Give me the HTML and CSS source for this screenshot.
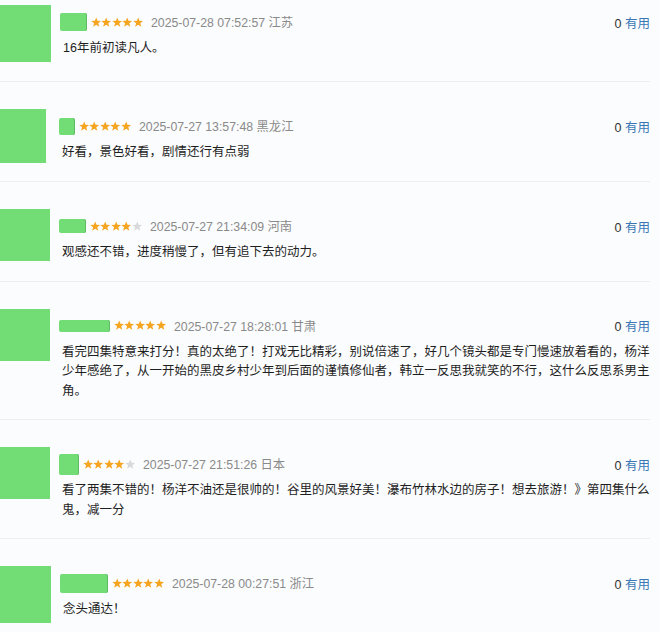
FILE: index.html
```html
<!DOCTYPE html>
<html lang="zh-CN">
<head>
<meta charset="utf-8">
<link rel="stylesheet" href="styles.css">
</head>
<body>
<svg class="defs" width="0" height="0" aria-hidden="true">
  <defs>
    <polygon id="star" points="5,0.4 6.25,3.65 9.7,3.8 7,5.95 7.95,9.3 5,7.4 2.05,9.3 3,5.95 0.3,3.8 3.75,3.65"/>
  </defs>
</svg>
<ul class="reviews">
  <li class="review first">
    <div class="avatar tall"></div>
    <div class="body">
      <div class="meta">
        <span class="name w27 h18"></span>
        <span class="stars"><svg viewBox="0 0 10 10"><use href="#star"/></svg><svg viewBox="0 0 10 10"><use href="#star"/></svg><svg viewBox="0 0 10 10"><use href="#star"/></svg><svg viewBox="0 0 10 10"><use href="#star"/></svg><svg viewBox="0 0 10 10"><use href="#star"/></svg></span>
        <span class="date">2025-07-28 07:52:57 江苏</span>
        <span class="useful"><span class="count">0</span> <span class="vote">有用</span></span>
      </div>
      <p class="text">16年前初读凡人。</p>
    </div>
  </li>
  <li class="review">
    <div class="avatar narrow"></div>
    <div class="body">
      <div class="meta">
        <span class="name w16 h17"></span>
        <span class="stars"><svg viewBox="0 0 10 10"><use href="#star"/></svg><svg viewBox="0 0 10 10"><use href="#star"/></svg><svg viewBox="0 0 10 10"><use href="#star"/></svg><svg viewBox="0 0 10 10"><use href="#star"/></svg><svg viewBox="0 0 10 10"><use href="#star"/></svg></span>
        <span class="date">2025-07-27 13:57:48 黑龙江</span>
        <span class="useful"><span class="count">0</span> <span class="vote">有用</span></span>
      </div>
      <p class="text">好看，景色好看，剧情还行有点弱</p>
    </div>
  </li>
  <li class="review">
    <div class="avatar short"></div>
    <div class="body">
      <div class="meta">
        <span class="name w27 h14"></span>
        <span class="stars"><svg viewBox="0 0 10 10"><use href="#star"/></svg><svg viewBox="0 0 10 10"><use href="#star"/></svg><svg viewBox="0 0 10 10"><use href="#star"/></svg><svg viewBox="0 0 10 10"><use href="#star"/></svg><svg class="off" viewBox="0 0 10 10"><use href="#star"/></svg></span>
        <span class="date">2025-07-27 21:34:09 河南</span>
        <span class="useful"><span class="count">0</span> <span class="vote">有用</span></span>
      </div>
      <p class="text">观感还不错，进度稍慢了，但有追下去的动力。</p>
    </div>
  </li>
  <li class="review">
    <div class="avatar short"></div>
    <div class="body">
      <div class="meta">
        <span class="name w51 h12"></span>
        <span class="stars"><svg viewBox="0 0 10 10"><use href="#star"/></svg><svg viewBox="0 0 10 10"><use href="#star"/></svg><svg viewBox="0 0 10 10"><use href="#star"/></svg><svg viewBox="0 0 10 10"><use href="#star"/></svg><svg viewBox="0 0 10 10"><use href="#star"/></svg></span>
        <span class="date">2025-07-27 18:28:01 甘肃</span>
        <span class="useful"><span class="count">0</span> <span class="vote">有用</span></span>
      </div>
      <p class="text">看完四集特意来打分！真的太绝了！打戏无比精彩，别说倍速了，好几个镜头都是专门慢速放着看的，杨洋少年感绝了，从一开始的黑皮乡村少年到后面的谨慎修仙者，韩立一反思我就笑的不行，这什么反思系男主角。</p>
    </div>
  </li>
  <li class="review">
    <div class="avatar short"></div>
    <div class="body">
      <div class="meta">
        <span class="name w20 h21"></span>
        <span class="stars"><svg viewBox="0 0 10 10"><use href="#star"/></svg><svg viewBox="0 0 10 10"><use href="#star"/></svg><svg viewBox="0 0 10 10"><use href="#star"/></svg><svg viewBox="0 0 10 10"><use href="#star"/></svg><svg class="off" viewBox="0 0 10 10"><use href="#star"/></svg></span>
        <span class="date">2025-07-27 21:51:26 日本</span>
        <span class="useful"><span class="count">0</span> <span class="vote">有用</span></span>
      </div>
      <p class="text">看了两集不错的！杨洋不油还是很帅的！谷里的风景好美！瀑布竹林水边的房子！想去旅游！》第四集什么鬼，减一分</p>
    </div>
  </li>
  <li class="review">
    <div class="avatar tall"></div>
    <div class="body">
      <div class="meta">
        <span class="name w48 h19"></span>
        <span class="stars"><svg viewBox="0 0 10 10"><use href="#star"/></svg><svg viewBox="0 0 10 10"><use href="#star"/></svg><svg viewBox="0 0 10 10"><use href="#star"/></svg><svg viewBox="0 0 10 10"><use href="#star"/></svg><svg viewBox="0 0 10 10"><use href="#star"/></svg></span>
        <span class="date">2025-07-28 00:27:51 浙江</span>
        <span class="useful"><span class="count">0</span> <span class="vote">有用</span></span>
      </div>
      <p class="text">念头通达！</p>
    </div>
  </li>
</ul>
</body>
</html>
```

FILE: styles.css
```css
html, body {
  margin: 0;
  padding: 0;
  background: #fbfcfd;
  overflow: hidden;
}

body {
  font-family: "Liberation Sans", "Noto Sans CJK SC", sans-serif;
  color: #222;
}

.defs {
  position: absolute;
  width: 0;
  height: 0;
}

.reviews {
  list-style: none;
  margin: 0;
  padding: 0;
  width: 650px;
}

.review {
  display: flex;
  align-items: flex-start;
  padding: 27px 0 18px;
  border-bottom: 1px solid #eceef1;
}

.review.first {
  padding-top: 5px;
  padding-bottom: 19px;
}

.avatar {
  flex: none;
  width: 50px;
  height: 54px;
  margin-right: 9px;
  background: #71dd74;
}

.avatar.tall {
  height: 57px;
  width: 51px;
}

.avatar.narrow {
  width: 46px;
  margin-right: 13px;
}

.avatar.short {
  height: 52px;
}

.body {
  flex: 1;
  min-width: 0;
}

.meta {
  display: flex;
  align-items: center;
  height: 22px;
  margin-top: 6px;
}

.name {
  display: block;
  flex: none;
  background: #71dd74;
  border-radius: 2px;
  margin-right: 4px;
  box-shadow: inset -1px 0 0 rgba(60, 120, 70, 0.35);
}

.w16 { width: 16px; }
.w20 { width: 20px; }
.w27 { width: 27px; }
.w48 { width: 48px; }
.w51 { width: 51px; }
.h12 { height: 12px; }
.h14 { height: 14px; }
.h17 { height: 17px; }
.h18 { height: 18px; }
.h19 { height: 19px; }
.h21 { height: 21px; }

.stars {
  display: flex;
  margin-right: 8px;
}

.stars svg {
  width: 10.4px;
  height: 10.4px;
  fill: #f5a520;
  display: block;
}

.stars svg.off {
  fill: #d9d9d9;
}

.date {
  font-size: 12.3px;
  color: #8a8a8a;
  white-space: nowrap;
}

.useful {
  margin-left: auto;
  font-size: 12.5px;
  white-space: nowrap;
}

.count {
  color: #333;
}

.vote {
  color: #3a78b5;
}

.text {
  margin: 6px 0 0;
  padding-left: 3px;
  font-size: 12.5px;
  line-height: 19.5px;
  color: #1f1f1f;
}
```
